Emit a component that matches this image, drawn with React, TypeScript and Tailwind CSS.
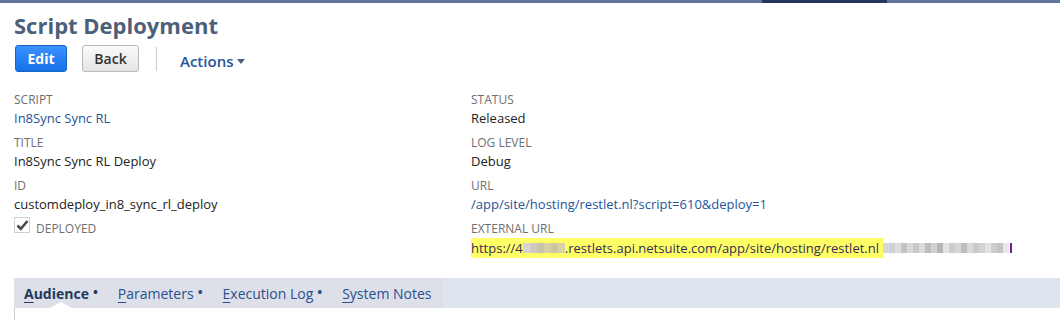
const LEFT = [
  { label: "SCRIPT", value: "In8Sync Sync RL", link: true },
  { label: "TITLE", value: "In8Sync Sync RL Deploy" },
  { label: "ID", value: "customdeploy_in8_sync_rl_deploy" },
];

const RIGHT = [
  { label: "STATUS", value: "Released" },
  { label: "LOG LEVEL", value: "Debug" },
  { label: "URL", value: "/app/site/hosting/restlet.nl?script=610&deploy=1", link: true },
];

const BLUR_A = ["#d9d4d4", "#cfcabd", "#c9c4a8", "#d6d0a6", "#cdc6a3", "#d8d2a4"];
const BLUR_B = [
  "#d8d6d8", "#cfcfd6", "#dedcdc", "#c2c2c6", "#d8d8dc", "#c8c8c8", "#dcdad6",
  "#bdbcbe", "#d2d0d0", "#b8b6b8", "#e2e2e6", "#cfcac8", "#d6d6da", "#bdbdc0",
  "#dedad6", "#c9c9cd", "#d4d2d4", "#e4e4e8", "#cfcfcf", "#c4c4c8", "#eaeaec",
];

type FieldProps = { label: string; value: string; link?: boolean };

function Field({ label, value, link }: FieldProps) {
  return (
    <div className="mb-[7px]">
      <div className="text-[12px] leading-[18px] text-[#6f6f6f] uppercase">{label}</div>
      <div
        className={
          "text-[13px] leading-[18px] " + (link ? "text-[#255599]" : "text-[#222222]")
        }
      >
        {value}
      </div>
    </div>
  );
}

function Blur({ colors, cell }: { colors: string[]; cell: number }) {
  return (
    <span className="inline-flex h-[10px] items-stretch align-middle">
      {colors.map((c, i) => (
        <span key={i} style={{ background: c, width: cell }} />
      ))}
    </span>
  );
}

function Tab({ first, rest, active, dot }: { first: string; rest: string; active?: boolean; dot?: boolean }) {
  return (
    <div
      className={
        "relative flex items-center h-full text-[14px] " +
        (active ? "font-bold text-[#24385b]" : "text-[#2a4f8f]")
      }
    >
      <span className="underline underline-offset-[3px]">{first}</span>
      <span>{rest}</span>
      {dot && <span className="ml-[4px] text-[13px] font-bold">•</span>}
      {active && (
        <span className="absolute left-[26px] bottom-0 w-0 h-0 border-l-[11px] border-r-[11px] border-b-[6px] border-l-transparent border-r-transparent border-b-white" />
      )}
    </div>
  );
}

export default function App() {
  return (
    <div className="w-[1060px] h-[320px] overflow-hidden bg-white font-['Open_Sans',sans-serif]">
      <div className="flex h-[3px]">
        <div className="w-[762px] bg-[#607799]" />
        <div className="w-[125px] bg-[#24385b]" />
        <div className="flex-1 bg-[#607799]" />
      </div>

      <div className="pl-[14px] pt-[7px] text-[22px] leading-[30px] font-bold text-[#4d5f79]">
        Script Deployment
      </div>

      <div className="flex items-center pl-[15px] mt-[5px] h-[27px]">
        <button className="w-[52px] h-[27px] rounded-[3px] border border-[#1665c9] bg-gradient-to-b from-[#3b91ff] to-[#1570e8] text-white text-[14px] font-bold">
          Edit
        </button>
        <button className="ml-[15px] w-[57px] h-[27px] rounded-[3px] border border-[#b9b9b9] bg-gradient-to-b from-[#fafafa] to-[#e4e4e4] text-[#333333] text-[14px] font-semibold">
          Back
        </button>
        <div className="ml-[17px] w-px h-[24px] bg-[#cccccc]" />
        <div className="ml-[23px] mt-[5px] flex items-center text-[15px] font-semibold text-[#255599]">
          Actions
          <span className="ml-[4px] w-0 h-0 border-l-[4px] border-r-[4px] border-t-[5px] border-l-transparent border-r-transparent border-t-[#4d5f79]" />
        </div>
      </div>

      <div className="flex mt-[19px]">
        <div className="w-[471px] pl-[14px]">
          {LEFT.map((f) => (
            <Field key={f.label} {...f} />
          ))}
          <div className="flex items-start -mt-[3px]">
            <div className="w-[16px] h-[16px] border border-[#cfcfcf] bg-white flex items-center justify-center">
              <svg width="13" height="12" viewBox="0 0 13 12">
                <path d="M1.5 6.5 L4.8 9.8 L11.5 2" fill="none" stroke="#4a4a4a" strokeWidth="2.6" />
              </svg>
            </div>
            <span className="ml-[6px] mt-[3px] text-[12px] leading-[18px] text-[#6f6f6f]">DEPLOYED</span>
          </div>
        </div>
        <div className="flex-1">
          {RIGHT.map((f) => (
            <Field key={f.label} {...f} />
          ))}
          <div className="text-[12px] leading-[18px] text-[#6f6f6f]">EXTERNAL URL</div>
          <div className="flex items-center h-[20px] text-[13px] leading-[18px] text-[#3a2c55]">
            <span className="flex items-center h-[20px] bg-[#ffff66] pr-[4px]">
              https://4
              <Blur colors={BLUR_A} cell={7} />
              .restlets.api.netsuite.com/app/site/hosting/restlet.nl
            </span>
            <Blur colors={BLUR_B} cell={6} />
            <span className="ml-[1px] w-[2px] h-[10px] bg-[#7a1a9a]" />
          </div>
        </div>
      </div>

      <div className="mt-[20px] ml-[14px] flex h-[30px] bg-[#dfe5ee]">
        <div className="flex items-center h-full w-[429px] bg-[#dde0e8] pl-[10px] gap-[20px]">
          <Tab first="A" rest="udience" active dot />
          <Tab first="P" rest="arameters" dot />
          <Tab first="E" rest="xecution Log" dot />
          <Tab first="S" rest="ystem Notes" />
        </div>
      </div>
      <div className="ml-[14px] w-px h-[12px] bg-[#cccccc]" />
    </div>
  );
}
